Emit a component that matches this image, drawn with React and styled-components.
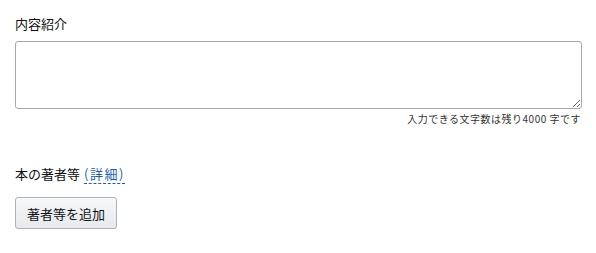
import React from 'react';
import styled, { createGlobalStyle } from 'styled-components';

const GlobalStyle = createGlobalStyle`
  body {
    margin: 0;
    background: #fff;
    font-family: "Noto Sans CJK JP", "Noto Sans", sans-serif;
    color: #111;
  }
`;

const Page = styled.div`
  padding: 15px 14px 0 15px;
`;

const Label = styled.div`
  font-size: 13px;
  line-height: 18px;
  margin-bottom: 8px;
`;

const TextArea = styled.textarea`
  display: block;
  box-sizing: border-box;
  width: 100%;
  height: 68px;
  border: 1px solid #a9a9a9;
  border-radius: 3px;
  padding: 4px 6px;
  font: inherit;
  resize: vertical;
`;

const Helper = styled.div`
  text-align: right;
  font-size: 10px;
  letter-spacing: 0.5px;
  line-height: 16px;
  color: #333;
  margin-top: 2px;
  padding-right: 1px;
`;

const AuthorRow = styled.div`
  margin-top: 38px;
  font-size: 13px;
  line-height: 18px;
`;

const Detail = styled.a`
  color: #1d5fa6;
  text-decoration: none;
  border-bottom: 1px dashed #1d5fa6;
  margin-left: 4px;
  letter-spacing: 1.5px;
  cursor: help;
`;

const AddButton = styled.button`
  margin-top: 14px;
  height: 32px;
  padding: 0 11px;
  font: inherit;
  font-size: 13px;
  color: #111;
  border: 1px solid #adb1b8;
  border-radius: 3px;
  background: linear-gradient(#f7f8fa, #e7e9ec);
  box-shadow: 0 1px 0 rgba(255, 255, 255, 0.6) inset;
  cursor: pointer;
`;

export default function App() {
  return (
    <>
      <GlobalStyle />
      <Page>
        <Label>内容紹介</Label>
        <TextArea />
        <Helper>入力できる文字数は残り4000 字です</Helper>
        <AuthorRow>
          本の著者等<Detail>(詳細)</Detail>
        </AuthorRow>
        <AddButton>著者等を追加</AddButton>
      </Page>
    </>
  );
}
